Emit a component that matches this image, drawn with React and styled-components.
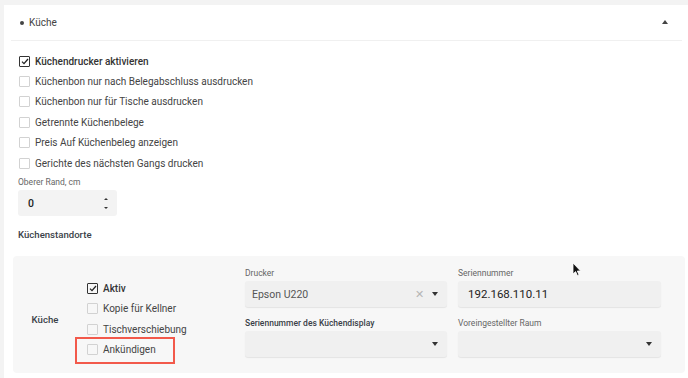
import React from 'react';
import styled, { createGlobalStyle } from 'styled-components';

const GlobalStyle = createGlobalStyle`
  html, body {
    margin: 0;
    padding: 0;
    background: #f3f3f3;
    font-family: Roboto, "Noto Sans", sans-serif;
    color: #3a3a3a;
  }
`;

const Card = styled.div`
  margin: 5px 0 0 4px;
  background: #fff;
  height: 373px;
  position: relative;
`;

const Header = styled.div`
  display: flex;
  align-items: center;
  height: 35px;
  margin: 0 6px 0 7px;
  padding: 0 14px 0 9px;
  border-bottom: 1px solid #f0f0f0;
  font-size: 10px;
  color: #444;
`;

const Bullet = styled.span`
  width: 4px;
  height: 4px;
  border-radius: 50%;
  background: #444;
  margin-right: 5px;
`;

const Caret = styled.span`
  margin-left: auto;
  width: 0;
  height: 0;
  border-left: 3.5px solid transparent;
  border-right: 3.5px solid transparent;
  border-bottom: 4px solid #444;
  margin-top: -2px;
`;

const Body = styled.div`
  padding: 10px 0 0 14px;
`;

const Row = styled.label`
  position: relative;
  display: flex;
  align-items: center;
  height: 20.4px;
  font-size: 10px;
  font-weight: ${p => (p.$bold ? 500 : 400)};
  color: ${p => (p.$bold ? '#333' : '#444')};

  ${p => p.$highlight && `
    &::after {
      content: '';
      position: absolute;
      left: -11px;
      top: -3px;
      width: 96px;
      height: 23px;
      border: 2.5px solid #f2594b;
    }
  `}
`;

const Box = styled.span`
  width: 11px;
  height: 11px;
  box-sizing: border-box;
  border: 1px solid ${p => (p.$checked ? '#333' : '#d2d2d2')};
  border-radius: 1px;
  margin: 0 5px 0 1px;
  display: flex;
  align-items: center;
  justify-content: center;
`;

const FieldLabel = styled.div`
  font-size: 8.5px;
  color: ${p => (p.$strong ? '#3a3f48' : '#666')};
  font-weight: ${p => (p.$strong ? 500 : 400)};
  height: 12px;
  line-height: 12px;
  margin-bottom: 2px;
`;

const MarginLabel = styled(FieldLabel)`
  margin-top: 3px;
`;

const NumberBox = styled.div`
  display: flex;
  align-items: center;
  justify-content: space-between;
  width: 99px;
  height: 26px;
  margin-top: 2px;
  box-sizing: border-box;
  padding: 0 9px 0 10px;
  background: #f3f3f3;
  border-radius: 3px;
  font-size: 10.5px;
  font-weight: 500;
  color: #222;
`;

const Spinner = styled.span`
  display: flex;
  flex-direction: column;
  gap: 7px;
`;

const Tri = styled.span`
  width: 0;
  height: 0;
  border-left: 2px solid transparent;
  border-right: 2px solid transparent;
  ${p => (p.$down ? 'border-top: 2.5px solid #333;' : 'border-bottom: 2.5px solid #333;')}
`;

const Section = styled.div`
  margin-top: 13px;
  font-size: 9.6px;
  font-weight: 500;
  color: #3a3f48;
`;

const Panel = styled.div`
  display: flex;
  align-items: flex-start;
  margin: 16px 3px 0 9px;
  height: 117px;
  background: #f7f7f7;
  border-radius: 4px;
`;

const Name = styled.div`
  width: 64px;
  align-self: center;
  text-align: center;
  font-size: 9.6px;
  font-weight: 500;
  color: #3a3f48;
  margin-top: 10px;
`;

const Checks = styled.div`
  width: 159px;
  margin-left: 9px;
  padding-top: 22px;
  display: flex;
  flex-direction: column;
`;

const Fields = styled.div`
  display: grid;
  grid-template-columns: 202px 203px;
  column-gap: 11px;
  row-gap: 10px;
  padding-top: 11px;
`;

const Select = styled.div`
  display: flex;
  align-items: center;
  height: 26px;
  box-sizing: border-box;
  padding: 0 9px 0 ${p => (p.$pad || 7)}px;
  background: #f0f0f0;
  border-radius: 3px;
  box-shadow: 0 1px 1px rgba(0, 0, 0, 0.08);
  font-size: ${p => p.$size || 11}px;
  color: ${p => (p.$muted ? '#555' : '#222')};
`;

const Clear = styled.span`
  margin-left: auto;
  color: #b5b5b5;
  font-size: 11px;
  margin-right: 8px;
`;

const Drop = styled.span`
  margin-left: ${p => (p.$auto ? 'auto' : '0')};
  width: 0;
  height: 0;
  border-left: 3.5px solid transparent;
  border-right: 3.5px solid transparent;
  border-top: 4px solid #333;
`;

const Pointer = styled.svg`
  position: absolute;
  left: 568px;
  top: 257px;
`;

function Check({ checked }) {
  return (
    <Box $checked={checked}>
      {checked && (
        <svg width="8" height="7" viewBox="0 0 8 7">
          <path d="M1 3.6 L3 5.6 L7 1" fill="none" stroke="#222" strokeWidth="1.3" />
        </svg>
      )}
    </Box>
  );
}

const options = [
  'Küchenbon nur nach Belegabschluss ausdrucken',
  'Küchenbon nur für Tische ausdrucken',
  'Getrennte Küchenbelege',
  'Preis Auf Küchenbeleg anzeigen',
  'Gerichte des nächsten Gangs drucken',
];

export default function App() {
  return (
    <>
      <GlobalStyle />
      <Card>
        <Header>
          <Bullet />
          Küche
          <Caret />
        </Header>
        <Body>
          <Row $bold>
            <Check checked />
            Küchendrucker aktivieren
          </Row>
          {options.map(o => (
            <Row key={o}>
              <Check />
              {o}
            </Row>
          ))}
          <MarginLabel>Oberer Rand, cm</MarginLabel>
          <NumberBox>
            0
            <Spinner>
              <Tri />
              <Tri $down />
            </Spinner>
          </NumberBox>
          <Section>Küchenstandorte</Section>
        </Body>
        <Panel>
          <Name>Küche</Name>
          <Checks>
            <Row $bold>
              <Check checked />
              Aktiv
            </Row>
            <Row>
              <Check />
              Kopie für Kellner
            </Row>
            <Row>
              <Check />
              Tischverschiebung
            </Row>
            <Row $highlight>
              <Check />
              Ankündigen
            </Row>
          </Checks>
          <Fields>
            <div>
              <FieldLabel>Drucker</FieldLabel>
              <Select $muted $size={10.5}>
                Epson U220
                <Clear>✕</Clear>
                <Drop />
              </Select>
            </div>
            <div>
              <FieldLabel>Seriennummer</FieldLabel>
              <Select $pad={10} $size={11.5}>192.168.110.11</Select>
            </div>
            <div>
              <FieldLabel $strong>Seriennummer des Küchendisplay</FieldLabel>
              <Select>
                <Drop $auto />
              </Select>
            </div>
            <div>
              <FieldLabel>Voreingestellter Raum</FieldLabel>
              <Select>
                <Drop $auto />
              </Select>
            </div>
          </Fields>
        </Panel>
        <Pointer width="10" height="15" viewBox="0 0 10 15">
          <path d="M1 1 L1 12 L3.6 9.6 L5.4 13.6 L7 12.9 L5.3 9 L8.6 9 Z" fill="#111" stroke="#fff" strokeWidth="0.8" />
        </Pointer>
      </Card>
    </>
  );
}
